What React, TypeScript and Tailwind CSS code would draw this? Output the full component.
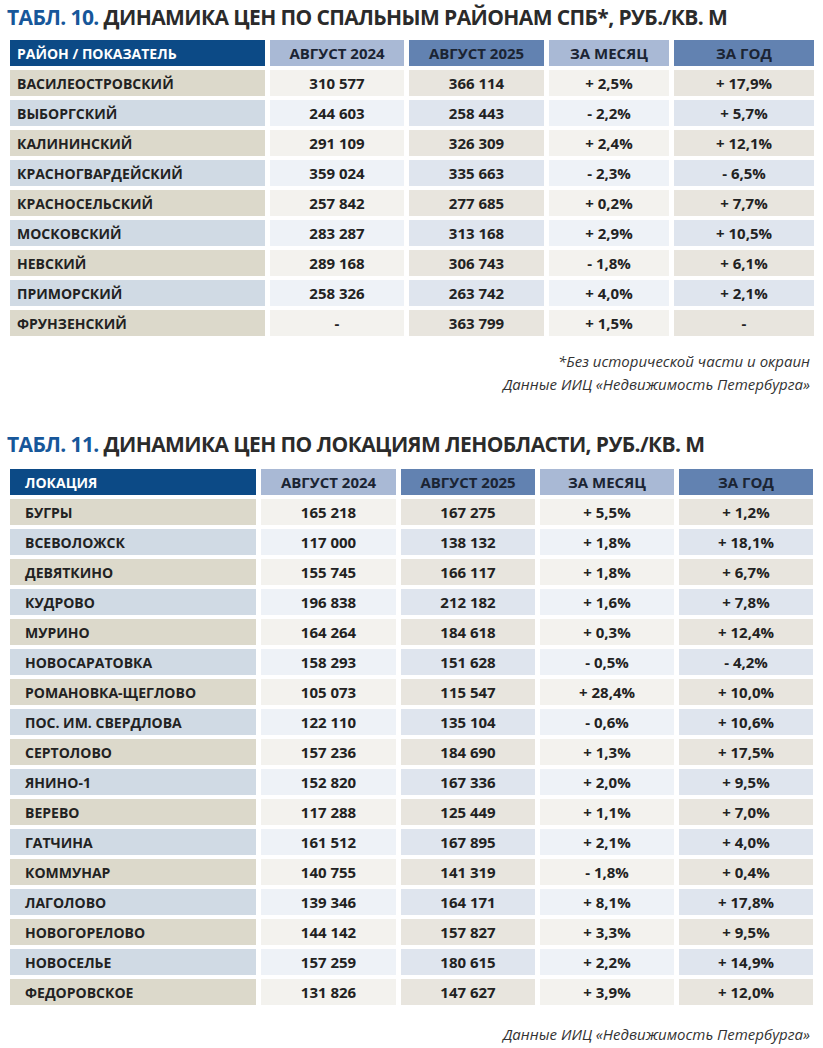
import React from "react";

type Row = [string, string, string, string, string];

const t10: Row[] = [
  ["ВАСИЛЕОСТРОВСКИЙ", "310 577", "366 114", "+ 2,5%", "+ 17,9%"],
  ["ВЫБОРГСКИЙ", "244 603", "258 443", "- 2,2%", "+ 5,7%"],
  ["КАЛИНИНСКИЙ", "291 109", "326 309", "+ 2,4%", "+ 12,1%"],
  ["КРАСНОГВАРДЕЙСКИЙ", "359 024", "335 663", "- 2,3%", "- 6,5%"],
  ["КРАСНОСЕЛЬСКИЙ", "257 842", "277 685", "+ 0,2%", "+ 7,7%"],
  ["МОСКОВСКИЙ", "283 287", "313 168", "+ 2,9%", "+ 10,5%"],
  ["НЕВСКИЙ", "289 168", "306 743", "- 1,8%", "+ 6,1%"],
  ["ПРИМОРСКИЙ", "258 326", "263 742", "+ 4,0%", "+ 2,1%"],
  ["ФРУНЗЕНСКИЙ", "-", "363 799", "+ 1,5%", "-"],
];

const t11: Row[] = [
  ["БУГРЫ", "165 218", "167 275", "+ 5,5%", "+ 1,2%"],
  ["ВСЕВОЛОЖСК", "117 000", "138 132", "+ 1,8%", "+ 18,1%"],
  ["ДЕВЯТКИНО", "155 745", "166 117", "+ 1,8%", "+ 6,7%"],
  ["КУДРОВО", "196 838", "212 182", "+ 1,6%", "+ 7,8%"],
  ["МУРИНО", "164 264", "184 618", "+ 0,3%", "+ 12,4%"],
  ["НОВОСАРАТОВКА", "158 293", "151 628", "- 0,5%", "- 4,2%"],
  ["РОМАНОВКА-ЩЕГЛОВО", "105 073", "115 547", "+ 28,4%", "+ 10,0%"],
  ["ПОС. ИМ. СВЕРДЛОВА", "122 110", "135 104", "- 0,6%", "+ 10,6%"],
  ["СЕРТОЛОВО", "157 236", "184 690", "+ 1,3%", "+ 17,5%"],
  ["ЯНИНО-1", "152 820", "167 336", "+ 2,0%", "+ 9,5%"],
  ["ВЕРЕВО", "117 288", "125 449", "+ 1,1%", "+ 7,0%"],
  ["ГАТЧИНА", "161 512", "167 895", "+ 2,1%", "+ 4,0%"],
  ["КОММУНАР", "140 755", "141 319", "- 1,8%", "+ 0,4%"],
  ["ЛАГОЛОВО", "139 346", "164 171", "+ 8,1%", "+ 17,8%"],
  ["НОВОГОРЕЛОВО", "144 142", "157 827", "+ 3,3%", "+ 9,5%"],
  ["НОВОСЕЛЬЕ", "157 259", "180 615", "+ 2,2%", "+ 14,9%"],
  ["ФЕДОРОВСКОЕ", "131 826", "147 627", "+ 3,9%", "+ 12,0%"],
];

const headBg = ["bg-[#0c4a86]", "bg-[#a9b9d5]", "bg-[#6282b1]", "bg-[#a9b9d5]", "bg-[#6282b1]"];
const oddBg = ["bg-[#dcd9cb]", "bg-[#f3f2ee]", "bg-[#e8e5de]", "bg-[#f3f2ee]", "bg-[#e8e5de]"];
const evenBg = ["bg-[#d0dae4]", "bg-[#eef2f7]", "bg-[#dfe5ee]", "bg-[#eef2f7]", "bg-[#dfe5ee]"];

function Table({
  head,
  rows,
  cols,
  pad,
}: {
  head: Row;
  rows: Row[];
  cols: string;
  pad: string;
}) {
  return (
    <div className={`grid ${cols} gap-x-[5px] gap-y-[4px] pl-[10px] font-bold text-[#222]`}>
      {head.map((h, i) => (
        <div
          key={"h" + i}
          className={`h-[26px] flex items-center ${headBg[i]} ${
            i === 0 ? `text-white text-[14px] ${pad}` : "justify-center text-[15px] text-[#1b2433]"
          }`}
        >
          {h}
        </div>
      ))}
      {rows.map((r, ri) =>
        r.map((c, i) => (
          <div
            key={ri + "-" + i}
            className={`h-[26px] flex items-center ${(ri % 2 === 0 ? oddBg : evenBg)[i]} ${
              i === 0 ? `text-[14px] ${pad}` : "justify-center text-[15px]"
            }`}
          >
            {c}
          </div>
        ))
      )}
    </div>
  );
}

function Title({ num, text }: { num: string; text: string }) {
  return (
    <div className="pl-[7px] text-[21px] font-bold leading-none tracking-[-0.6px] whitespace-nowrap">
      <span className="text-[#17579a]">{num}</span>{" "}
      <span className="text-[#2b2b2b]">{text}</span>
    </div>
  );
}

export default function App() {
  return (
    <div
      className="w-[823px] h-[1048px] bg-white overflow-hidden"
      style={{ fontFamily: '"Open Sans", "Noto Sans", sans-serif' }}
    >
      <div className="pt-[7px]">
        <Title num="ТАБЛ. 10." text="ДИНАМИКА ЦЕН ПО СПАЛЬНЫМ РАЙОНАМ СПБ*, РУБ./КВ. М" />
      </div>
      <div className="mt-[12px]">
        <Table
          head={["РАЙОН / ПОКАЗАТЕЛЬ", "АВГУСТ 2024", "АВГУСТ 2025", "ЗА МЕСЯЦ", "ЗА ГОД"]}
          rows={t10}
          cols="grid-cols-[255px_134px_135px_120px_140px]"
          pad="pl-[7px]"
        />
      </div>
      <div className="mt-[14px] pr-[13px] text-right italic text-[15px] leading-[23px] text-[#333]">
        <div>*Без исторической части и окраин</div>
        <div>Данные ИИЦ «Недвижимость Петербурга»</div>
      </div>
      <div className="mt-[38px]">
        <Title num="ТАБЛ. 11." text="ДИНАМИКА ЦЕН ПО ЛОКАЦИЯМ ЛЕНОБЛАСТИ, РУБ./КВ. М" />
      </div>
      <div className="mt-[14px]">
        <Table
          head={["ЛОКАЦИЯ", "АВГУСТ 2024", "АВГУСТ 2025", "ЗА МЕСЯЦ", "ЗА ГОД"]}
          rows={t11}
          cols="grid-cols-[246px_135px_134px_134px_134px]"
          pad="pl-[15px]"
        />
      </div>
      <div className="mt-[18px] pr-[13px] text-right italic text-[15px] leading-[23px] text-[#333]">
        Данные ИИЦ «Недвижимость Петербурга»
      </div>
    </div>
  );
}
